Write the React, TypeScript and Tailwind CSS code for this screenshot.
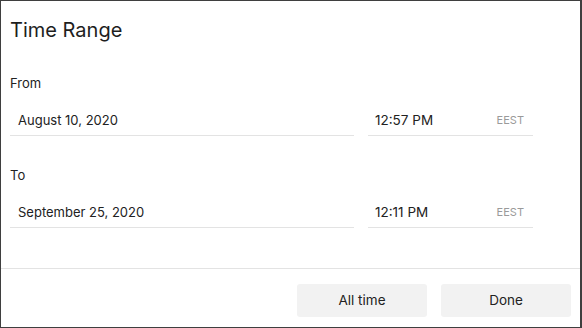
import React from "react";

const font = { fontFamily: "Inter, 'Noto Sans', sans-serif" };

function Field({ date, time }: { date: string; time: string }) {
  return (
    <div className="flex gap-[14px]">
      <div className="w-[344px] border-b border-[#e3e3e3] pl-[8px] pt-[21px] pb-[7px] text-[13px] leading-[16px] text-[#222]">
        {date}
      </div>
      <div className="w-[165px] border-b border-[#e3e3e3] pl-[7px] pr-[9px] pt-[21px] pb-[7px] flex items-end justify-between">
        <span className="text-[13.5px] leading-[16px] text-[#222]">{time}</span>
        <span className="text-[11px] leading-[16px] text-[#9a9a9a]">EEST</span>
      </div>
    </div>
  );
}

export default function App() {
  return (
    <div
      style={font}
      className="w-[582px] h-[328px] bg-white border-l border-t border-b border-r-2 border-[#3f3f3f] flex flex-col overflow-hidden"
    >
      <div className="pl-[9px] pt-[16px]">
        <div className="text-[20px] leading-[26px] text-[#1e1e1e]">Time Range</div>
      </div>
      <div className="pl-[9px] mt-[32px]">
        <div className="text-[13px] leading-[16px] text-[#222]">From</div>
        <Field date="August 10, 2020" time="12:57 PM" />
        <div className="text-[13px] leading-[16px] text-[#222] mt-[31px]">To</div>
        <Field date="September 25, 2020" time="12:11 PM" />
      </div>
      <div className="mt-[40px] border-t border-[#e3e3e3] flex justify-end gap-[14px] pt-[15px] pr-[9px]">
        <button className="w-[130px] h-[33px] rounded-[3px] bg-[#f2f2f2] text-[13.5px] text-[#222]">
          All time
        </button>
        <button className="w-[130px] h-[33px] rounded-[3px] bg-[#f2f2f2] text-[13.5px] text-[#222]">
          Done
        </button>
      </div>
    </div>
  );
}
